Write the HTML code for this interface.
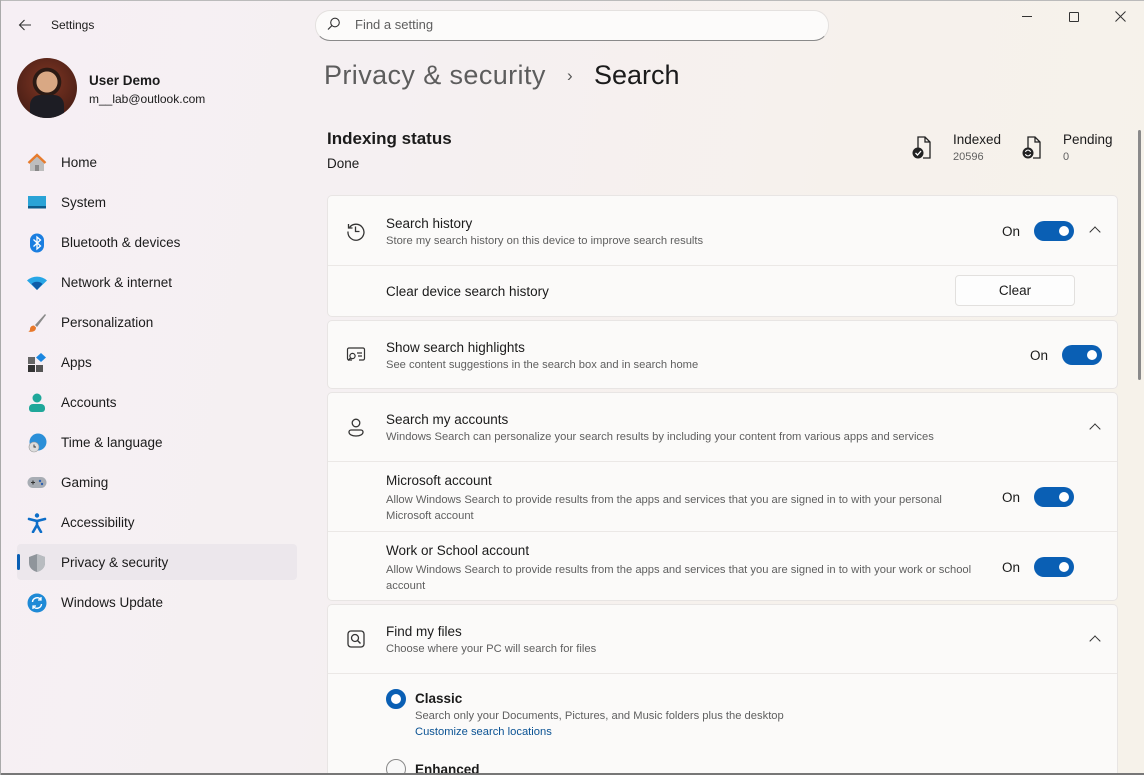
<!DOCTYPE html>
<html style="overflow:hidden;height:775px"><head><meta charset="utf-8">
<style>
*{margin:0;padding:0;box-sizing:border-box}
body{width:1144px;height:775px;overflow:hidden;font-family:"Liberation Sans",sans-serif;color:#1b1b1b;position:relative;
background:linear-gradient(100deg,#f6eff4 0%,#f5f0f2 30%,#f6f1ec 70%,#f6f2ea 100%);}
.a{position:absolute;white-space:nowrap}
.nav{position:absolute;left:61px;font-size:13.5px;color:#1b1b1b}
.ic{position:absolute;left:27px;width:20px;height:20px}
.card{position:absolute;left:327px;width:791px;background:#fbfaf9;border:1px solid #e8e5e4;border-radius:5px}
.sep{position:absolute;left:0;right:0;height:1px;background:#ebe8e6}
.t{font-size:13.5px;color:#1b1b1b}
.s{font-size:11.2px;color:#5f5f5f}
.tog{position:absolute;width:40px;height:20px;border-radius:10px;background:#0a5fb4}
.tog:after{content:"";position:absolute;right:5px;top:5px;width:10px;height:10px;border-radius:50%;background:#fff}
.on{font-size:13.5px}
.chev{position:absolute;width:8px;height:8px;border-left:1.3px solid #333;border-top:1.3px solid #333;transform:rotate(45deg)}
</style></head><body>
<div class="a" style="left:0;top:0;width:1144px;height:1px;background:#bbb"></div>
<svg class="a" style="left:18px;top:18px" width="14" height="14" viewBox="0 0 14 14"><path d="M13 7H1.5M6.5 2L1.5 7l5 5" fill="none" stroke="#333" stroke-width="1.1"/></svg>
<div class="a" style="left:51px;top:18px;font-size:12px">Settings</div>
<div class="a" style="left:17px;top:58px;width:60px;height:60px;border-radius:50%;overflow:hidden;background:radial-gradient(circle at 50% 40%,#d9a884 0 22%,#2b1a14 23% 30%,#6b2d1e 31%,#3a1812 100%)"><div style="position:absolute;left:13px;top:37px;width:34px;height:23px;border-radius:10px 10px 0 0;background:#1d1d24"></div></div>
<div class="a" style="left:89px;top:73px;font-size:13.5px;font-weight:bold">User Demo</div>
<div class="a" style="left:89px;top:92px;font-size:12px">m__lab@outlook.com</div>

<svg class="ic" style="top:153px" viewBox="0 0 20 20"><path d="M3 9L10 2l7 7v9H3z" fill="#bdbdbd"/><path d="M1.5 10L10 2l8.5 8" fill="none" stroke="#e77b2c" stroke-width="2.4"/><rect x="8" y="12" width="4" height="6" fill="#888"/></svg>
<div class="nav" style="top:155px">Home</div>
<svg class="ic" style="top:193px" viewBox="0 0 20 20"><rect x="1" y="3" width="18" height="12" fill="#2aa3d6"/><rect x="1" y="13" width="18" height="2.5" fill="#0c5b8a"/></svg>
<div class="nav" style="top:195px">System</div>
<svg class="ic" style="top:233px" viewBox="0 0 20 20"><rect x="3" y="0.5" width="14" height="19" rx="7" fill="#1a7ee0"/><path d="M6.5 6.5l7 6.5-3.5 3V4l3.5 3-7 6.5" fill="none" stroke="#fff" stroke-width="1.3"/></svg>
<div class="nav" style="top:235px">Bluetooth &amp; devices</div>
<svg class="ic" style="top:273px" viewBox="0 0 20 20"><path d="M0 7.5a15 15 0 0 1 20 0L10 17z" fill="#27a6e6"/><path d="M4.5 11a8 8 0 0 1 11 0L10 17z" fill="#0d5ca8"/></svg>
<div class="nav" style="top:275px">Network &amp; internet</div>
<svg class="ic" style="top:313px" viewBox="0 0 20 20"><path d="M18 1L8 12l2 2L19 2z" fill="#8a8a8a"/><path d="M7 12.5c-3 0-4 2-4 4 0 1-1 2-2 2 4 1 8 0 8-4z" fill="#e8782a"/></svg>
<div class="nav" style="top:315px">Personalization</div>
<svg class="ic" style="top:353px" viewBox="0 0 20 20"><rect x="1" y="4" width="7" height="7" fill="#666"/><rect x="1" y="12" width="7" height="7" fill="#333"/><rect x="9" y="12" width="7" height="7" fill="#555"/><path d="M14 0l5 4.5-5 4.5-5-4.5z" fill="#1a86e0"/></svg>
<div class="nav" style="top:355px">Apps</div>
<svg class="ic" style="top:393px" viewBox="0 0 20 20"><circle cx="10" cy="5" r="4.5" fill="#1fa79a"/><path d="M2 15a4 4 0 0 1 4-4h8a4 4 0 0 1 4 4v1a3 3 0 0 1-3 3H5a3 3 0 0 1-3-3z" fill="#1fa79a"/></svg>
<div class="nav" style="top:395px">Accounts</div>
<svg class="ic" style="top:433px" viewBox="0 0 20 20"><circle cx="11" cy="9" r="8.5" fill="#2b8fd8"/><circle cx="7" cy="14" r="5" fill="#ddd" stroke="#999" stroke-width=".6"/><path d="M7 11.5V14h2" fill="none" stroke="#333" stroke-width=".9"/></svg>
<div class="nav" style="top:435px">Time &amp; language</div>
<svg class="ic" style="top:473px" viewBox="0 0 20 20"><rect x="0.5" y="4" width="19" height="11" rx="5.5" fill="#a8adb4"/><path d="M4 9.5h4M6 7.5v4" stroke="#333" stroke-width="1.1"/><circle cx="13" cy="8" r="1.2" fill="#2c5fb0"/><circle cx="15" cy="11" r="1.2" fill="#2c5fb0"/></svg>
<div class="nav" style="top:475px">Gaming</div>
<svg class="ic" style="top:513px" viewBox="0 0 20 20"><circle cx="10" cy="2.5" r="2.2" fill="#0d6ec8"/><path d="M2 6l8 2 8-2M10 8v4l-4 7M10 12l4 7" fill="none" stroke="#0d6ec8" stroke-width="2.6" stroke-linecap="round"/></svg>
<div class="nav" style="top:515px">Accessibility</div>
<div class="a" style="left:17px;top:544px;width:280px;height:36px;background:#ece7ec;border-radius:4px"></div>
<div class="a" style="left:17px;top:554px;width:3px;height:16px;background:#0a5fb4;border-radius:2px"></div>
<svg class="ic" style="top:553px" viewBox="0 0 20 20"><path d="M10 1l8 3v6c0 5-4 8-8 9-4-1-8-4-8-9V4z" fill="#8f959b"/><path d="M10 1l8 3v6c0 5-4 8-8 9z" fill="#b8bcc0"/></svg>
<div class="nav" style="top:555px">Privacy &amp; security</div>
<svg class="ic" style="top:593px" viewBox="0 0 20 20"><circle cx="10" cy="10" r="9.5" fill="#1f8ad6"/><path d="M5.5 9a4.6 4.6 0 0 1 8.2-2.5M14.5 11a4.6 4.6 0 0 1-8.2 2.5" fill="none" stroke="#fff" stroke-width="1.4"/><path d="M14 4v3h-3M6 16v-3h3" fill="none" stroke="#fff" stroke-width="1.3"/></svg>
<div class="nav" style="top:595px">Windows Update</div>

<div class="a" style="left:315px;top:10px;width:514px;height:31px;background:#fcfbfa;border:1px solid #e4e1df;border-bottom:1px solid #8a8a8a;border-radius:15px"></div>
<svg class="a" style="left:327px;top:17px" width="14" height="14" viewBox="0 0 14 14"><circle cx="8" cy="5.5" r="4.3" fill="none" stroke="#333" stroke-width="1.1"/><path d="M5 8.5L1 12.5" stroke="#333" stroke-width="1.2"/></svg>
<div class="a" style="left:355px;top:17px;font-size:13px;color:#5e5e5e">Find a setting</div>
<div class="a" style="left:1022px;top:16px;width:10px;height:1px;background:#333"></div>
<div class="a" style="left:1069px;top:12px;width:10px;height:10px;border:1px solid #333;border-radius:1px"></div>
<svg class="a" style="left:1115px;top:11px" width="11" height="11"><path d="M0.5 0.5l10 10M10.5 0.5l-10 10" stroke="#333" stroke-width="1"/></svg>

<div class="a" style="left:324px;top:60px;font-size:27px;color:#5d5d5d;letter-spacing:0.4px">Privacy &amp; security</div>
<div class="a" style="left:567px;top:66px;font-size:17px;color:#555">›</div>
<div class="a" style="left:594px;top:60px;font-size:27px;color:#1b1b1b">Search</div>

<div class="a" style="left:327px;top:129px;font-size:17px;font-weight:bold;color:#1b1b1b">Indexing status</div>
<div class="a" style="left:327px;top:156px;font-size:13.5px">Done</div>
<svg class="a" style="left:911px;top:135px" width="22" height="25" viewBox="0 0 22 25"><path d="M7 13V2h7l5 5v16H12M14 2v5h5" fill="none" stroke="#222" stroke-width="1.3"/><circle cx="7" cy="18" r="5.5" fill="#222"/><path d="M4.5 18l2 2 3.5-4" fill="none" stroke="#fff" stroke-width="1.3"/></svg>
<div class="a" style="left:953px;top:132px;font-size:13.5px">Indexed</div>
<div class="a" style="left:953px;top:151px;font-size:11px;color:#5f5f5f">20596</div>
<svg class="a" style="left:1021px;top:135px" width="22" height="25" viewBox="0 0 22 25"><path d="M7 13V2h7l5 5v16H12M14 2v5h5" fill="none" stroke="#222" stroke-width="1.3"/><circle cx="7" cy="18" r="5.5" fill="#222"/><path d="M4.5 17a2.6 2.6 0 0 1 5 0M9.5 19a2.6 2.6 0 0 1-5 0" fill="none" stroke="#fff" stroke-width="1.1"/></svg>
<div class="a" style="left:1063px;top:132px;font-size:13.5px">Pending</div>
<div class="a" style="left:1063px;top:151px;font-size:11px;color:#5f5f5f">0</div>
<div class="a" style="left:1138px;top:130px;width:3px;height:250px;background:#8a8a8a;border-radius:2px"></div>

<div class="card" style="top:195px;height:122px">
 <svg class="a" style="left:18px;top:25px" width="20" height="20" viewBox="0 0 20 20"><path d="M3.5 6.5A8 8 0 1 1 2 10.5" fill="none" stroke="#333" stroke-width="1.3"/><path d="M2.5 3v4h4" fill="none" stroke="#333" stroke-width="1.3"/><path d="M9.5 5.5v5h4" fill="none" stroke="#333" stroke-width="1.3"/></svg>
 <div class="a t" style="left:58px;top:20px">Search history</div>
 <div class="a s" style="left:58px;top:39px">Store my search history on this device to improve search results</div>
 <div class="a on" style="left:674px;top:28px">On</div>
 <div class="tog" style="left:706px;top:25px"></div>
 <div class="chev" style="left:763px;top:32px"></div>
 <div class="sep" style="top:69px"></div>
 <div class="a t" style="left:58px;top:88px">Clear device search history</div>
 <div class="a" style="left:627px;top:79px;width:120px;height:31px;background:#fdfdfd;border:1px solid #e2e0de;border-radius:4px;font-size:13.5px;text-align:center;line-height:29px">Clear</div>
</div>
<div class="card" style="top:320px;height:69px">
 <svg class="a" style="left:18px;top:24px" width="20" height="20" viewBox="0 0 20 20"><path d="M6 15H3a1.5 1.5 0 0 1-1.5-1.5v-9A1.5 1.5 0 0 1 3 3h14a1.5 1.5 0 0 1 1.5 1.5v9A1.5 1.5 0 0 1 17 15h-4M11 8h5M12 11h4" fill="none" stroke="#333" stroke-width="1.2"/><circle cx="6.5" cy="11" r="2.6" fill="none" stroke="#333" stroke-width="1.2"/><path d="M4.6 13l-2.5 2.5" stroke="#333" stroke-width="1.3"/></svg>
 <div class="a t" style="left:58px;top:19px">Show search highlights</div>
 <div class="a s" style="left:58px;top:38px">See content suggestions in the search box and in search home</div>
 <div class="a on" style="left:702px;top:27px">On</div>
 <div class="tog" style="left:734px;top:24px"></div>
</div>
<div class="card" style="top:392px;height:209px">
 <svg class="a" style="left:18px;top:24px" width="20" height="22" viewBox="0 0 20 22"><circle cx="10" cy="6" r="3.8" fill="none" stroke="#333" stroke-width="1.3"/><path d="M3 15a2 2 0 0 1 2-2h10a2 2 0 0 1 2 2c0 2.5-3 4-7 4s-7-1.5-7-4z" fill="none" stroke="#333" stroke-width="1.3"/></svg>
 <div class="a t" style="left:58px;top:19px">Search my accounts</div>
 <div class="a s" style="left:58px;top:38px">Windows Search can personalize your search results by including your content from various apps and services</div>
 <div class="chev" style="left:763px;top:32px"></div>
 <div class="sep" style="top:68px"></div>
 <div class="a t" style="left:58px;top:80px">Microsoft account</div>
 <div class="a s" style="left:58px;top:99px;line-height:16px;white-space:normal;width:570px">Allow Windows Search to provide results from the apps and services that you are signed in to with your personal Microsoft account</div>
 <div class="a on" style="left:674px;top:97px">On</div>
 <div class="tog" style="left:706px;top:94px"></div>
 <div class="sep" style="top:138px"></div>
 <div class="a t" style="left:58px;top:150px">Work or School account</div>
 <div class="a s" style="left:58px;top:169px;line-height:16px;white-space:normal;width:600px">Allow Windows Search to provide results from the apps and services that you are signed in to with your work or school account</div>
 <div class="a on" style="left:674px;top:167px">On</div>
 <div class="tog" style="left:706px;top:164px"></div>
</div>
<div class="card" style="top:604px;height:171px;border-bottom:none;border-radius:5px 5px 0 0">
 <svg class="a" style="left:18px;top:24px" width="20" height="20" viewBox="0 0 20 20"><rect x="2" y="2" width="16" height="16" rx="3" fill="none" stroke="#333" stroke-width="1.3"/><circle cx="9" cy="9" r="3.5" fill="none" stroke="#333" stroke-width="1.3"/><path d="M11.5 11.5L14.5 14.5" stroke="#333" stroke-width="1.4"/></svg>
 <div class="a t" style="left:58px;top:19px">Find my files</div>
 <div class="a s" style="left:58px;top:38px">Choose where your PC will search for files</div>
 <div class="chev" style="left:763px;top:32px"></div>
 <div class="sep" style="top:68px"></div>
 <div class="a" style="left:58px;top:84px;width:20px;height:20px;border-radius:50%;border:5px solid #0a5fb4;background:#fff"></div>
 <div class="a" style="left:87px;top:86px;font-size:13.5px;font-weight:bold">Classic</div>
 <div class="a s" style="left:87px;top:105px">Search only your Documents, Pictures, and Music folders plus the desktop</div>
 <div class="a" style="left:87px;top:121px;font-size:11.2px;color:#0b5394">Customize search locations</div>
 <div class="a" style="left:58px;top:154px;width:20px;height:20px;border-radius:50%;border:1px solid #888;background:#f8f8f8"></div>
 <div class="a" style="left:87px;top:157px;font-size:13.5px;font-weight:bold">Enhanced</div>
</div>
<div class="a" style="left:0;top:773px;width:1144px;height:2px;background:#777"></div>
<div class="a" style="left:0;top:0;width:1px;height:775px;background:#aaa"></div>
</body></html>
